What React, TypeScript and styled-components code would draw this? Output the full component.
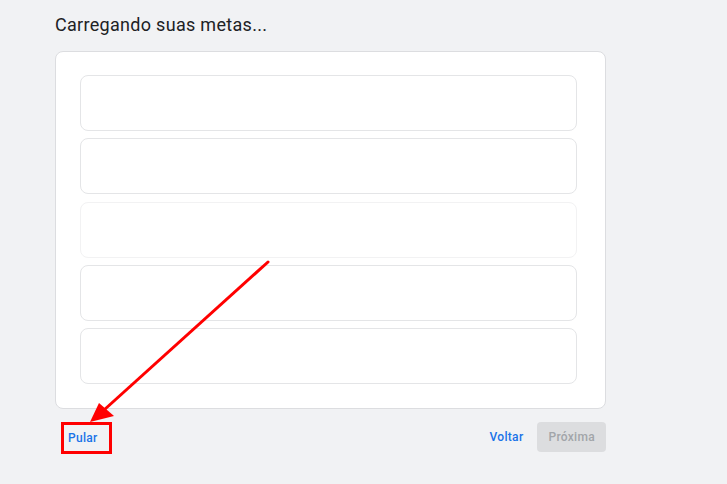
import React from 'react';
import styled, { createGlobalStyle } from 'styled-components';

const GlobalStyle = createGlobalStyle`
  html, body {
    margin: 0;
    padding: 0;
    background: #f1f2f4;
    font-family: Roboto, "Open Sans", Arial, sans-serif;
  }
`;

const Page = styled.div`
  position: relative;
  width: 727px;
  height: 484px;
  padding: 13px 0 0 55px;
  box-sizing: border-box;
  background: #f1f2f4;
  overflow: hidden;
`;

const Column = styled.div`
  width: 551px;
  display: flex;
  flex-direction: column;
`;

const Title = styled.h1`
  margin: 0 0 14px;
  font-size: 18px;
  line-height: 24px;
  font-weight: 400;
  color: #202124;
  letter-spacing: 0.3px;
`;

const Card = styled.div`
  background: #fff;
  border: 1px solid #dcdde0;
  border-radius: 8px;
  padding: 23px 28px 24px 24px;
  display: flex;
  flex-direction: column;
  gap: 7px;
`;

const GoalRow = styled.div<{ $faint?: boolean }>`
  height: 56px;
  box-sizing: border-box;
  border: 1px solid ${(p) => (p.$faint ? '#f2f2f3' : '#e4e5e7')};
  border-radius: 8px;
  background: #fff;
  margin-top: ${(p) => (p.$faint ? '1px' : '0')};
`;

const Footer = styled.div`
  display: flex;
  align-items: flex-start;
  margin-top: 13px;
`;

const TextButton = styled.button<{ $highlighted?: boolean }>`
  height: ${(p) => (p.$highlighted ? '32px' : '30px')};
  box-sizing: border-box;
  padding: 0 ${(p) => (p.$highlighted ? '4px' : '0')};
  border: ${(p) => (p.$highlighted ? '3px solid #ff0000' : 'none')};
  background: transparent;
  color: #1a73e8;
  font-family: Roboto, Arial, sans-serif;
  font-size: 12px;
  font-weight: 500;
  letter-spacing: 0.3px;
  cursor: pointer;
  text-align: left;
  width: ${(p) => (p.$highlighted ? '51px' : 'auto')};
  margin-left: ${(p) => (p.$highlighted ? '6px' : '0')};
`;

const Spacer = styled.div`
  flex: 1;
`;

const NextButton = styled.button`
  height: 30px;
  padding: 0 11px;
  margin-left: 14px;
  border: none;
  border-radius: 4px;
  background: #dcdddf;
  color: #a2a5a9;
  font-family: Roboto, Arial, sans-serif;
  font-size: 12px;
  font-weight: 500;
  letter-spacing: 0.3px;
`;

const Annotation = styled.svg`
  position: absolute;
  left: 0;
  top: 0;
  pointer-events: none;
`;

export default function App() {
  return (
    <>
      <GlobalStyle />
      <Page>
        <Column>
          <Title>Carregando suas metas...</Title>
          <Card>
            <GoalRow />
            <GoalRow />
            <GoalRow $faint />
            <GoalRow />
            <GoalRow />
          </Card>
          <Footer>
            <TextButton $highlighted>Pular</TextButton>
            <Spacer />
            <TextButton>Voltar</TextButton>
            <NextButton disabled>Próxima</NextButton>
          </Footer>
        </Column>
        <Annotation width="727" height="484" viewBox="0 0 727 484">
          <line x1="268" y1="262" x2="104" y2="410" stroke="#ff0000" strokeWidth="3" strokeLinecap="round" />
          <polygon points="90,422 99,403 114,416" fill="#ff0000" />
        </Annotation>
      </Page>
    </>
  );
}
